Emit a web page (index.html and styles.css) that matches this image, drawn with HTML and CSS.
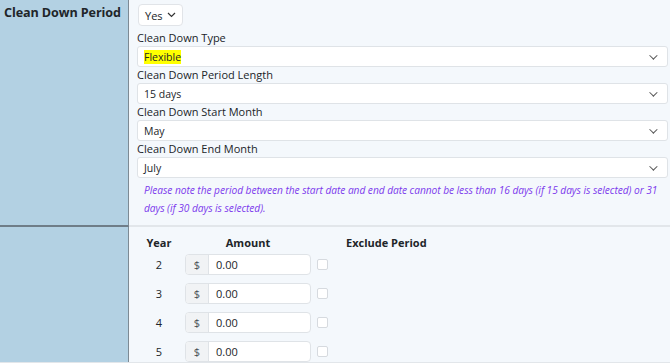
FILE: index.html
```html
<!DOCTYPE html>
<html>
<head>
    <meta charset="utf-8">
    <title>Clean Down Period</title>
    <link rel="stylesheet" href="styles.css">
</head>
<body>
<div class="form-table">
    <div class="row">
        <div class="row-label">Clean Down Period</div>
        <div class="row-body">
            <button type="button" class="yes-btn">Yes
                <svg width="9" height="6" viewBox="0 0 9 6"><path d="M1 1l3.5 3.5L8 1" fill="none" stroke="#333" stroke-width="1.2"/></svg>
            </button>
            <label class="field-label">Clean Down Type</label>
            <div class="select-box"><span class="hl">Flexible</span><span class="caret"></span></div>
            <label class="field-label">Clean Down Period Length</label>
            <div class="select-box"><span>15 days</span><span class="caret"></span></div>
            <label class="field-label">Clean Down Start Month</label>
            <div class="select-box"><span>May</span><span class="caret"></span></div>
            <label class="field-label">Clean Down End Month</label>
            <div class="select-box"><span>July</span><span class="caret"></span></div>
            <p class="note">Please note the period between the start date and end date cannot be less than 16 days (if 15 days is selected) or 31 days (if 30 days is selected).</p>
        </div>
    </div>
    <div class="row">
        <div class="row-label"></div>
        <div class="row-body">
            <div class="amount-head">
                <div class="year">Year</div>
                <div class="amount">Amount</div>
                <div class="exclude">Exclude Period</div>
            </div>
            <div class="amount-row">
                <div class="year">2</div>
                <div class="input-group"><span class="addon">$</span><span class="val">0.00</span></div>
                <span class="box"></span>
            </div>
            <div class="amount-row">
                <div class="year">3</div>
                <div class="input-group"><span class="addon">$</span><span class="val">0.00</span></div>
                <span class="box"></span>
            </div>
            <div class="amount-row">
                <div class="year">4</div>
                <div class="input-group"><span class="addon">$</span><span class="val">0.00</span></div>
                <span class="box"></span>
            </div>
            <div class="amount-row">
                <div class="year">5</div>
                <div class="input-group"><span class="addon">$</span><span class="val">0.00</span></div>
                <span class="box"></span>
            </div>
        </div>
    </div>
</div>
</body>
</html>
```

FILE: styles.css
```css
body {
    margin: 0;
    font-family: "Open Sans", "Noto Sans", sans-serif;
    font-size: 11px;
    color: #212529;
    background: #f4f8fc;
}

.form-table {
    width: 670px;
}

.row {
    display: flex;
    border-bottom: 2px solid #e2e6ea;
}

.row-label {
    width: 124px;
    flex: none;
    background: #b3d1e3;
    border-right: 1px solid #7d8a94;
    padding: 4px 0 0 4px;
    font-weight: bold;
    font-size: 12.6px;
    letter-spacing: -0.1px;
}

.row:first-child .row-label {
    border-bottom: 2px solid #6f7d88;
    margin-bottom: -2px;
}

.row-body {
    flex: 1;
    min-width: 0;
    padding: 4px 2px 0 8px;
}

.yes-btn {
    display: flex;
    align-items: center;
    gap: 4px;
    height: 22px;
    margin: 0 0 4px 1px;
    padding: 0 6px;
    background: #fff;
    border: 1px solid #e1e4e8;
    border-radius: 4px;
    font: inherit;
    color: #212529;
}

.field-label {
    display: block;
    line-height: 16px;
}

.select-box {
    display: flex;
    align-items: center;
    justify-content: space-between;
    height: 19px;
    padding: 0 12px 0 6px;
    background: #fff;
    border: 1px solid #dfe3e7;
    border-radius: 3px;
    font-size: 10.5px;
}

.hl {
    background: #ffff00;
}

.caret {
    width: 5px;
    height: 5px;
    border-right: 1.2px solid #555;
    border-bottom: 1.2px solid #555;
    transform: rotate(45deg) translateY(-2px);
}

.note {
    margin: 3px -2px 0 7px;
    padding-bottom: 8px;
    color: #7c3aed;
    font-style: italic;
    font-size: 10.2px;
    letter-spacing: -0.05px;
    line-height: 18px;
}

.amount-head {
    display: flex;
    padding-top: 4px;
    line-height: 16px;
    font-weight: bold;
}

.year {
    width: 44px;
    margin-right: 4px;
    text-align: center;
}

.amount {
    width: 126px;
    text-align: center;
}

.exclude {
    padding-left: 35px;
}

.amount-row {
    display: flex;
    align-items: center;
    margin-top: 8px;
}

.amount-head + .amount-row {
    margin-top: 3px;
}

.input-group {
    display: flex;
    width: 124px;
    height: 19px;
    border: 1px solid #dfe3e7;
    border-radius: 4px;
    background: #fff;
    overflow: hidden;
}

.addon {
    width: 22px;
    color: #495057;
    background: #f1f3f5;
    border-right: 1px solid #dfe3e7;
    display: flex;
    align-items: center;
    justify-content: center;
}

.val {
    display: flex;
    align-items: center;
    padding-left: 7px;
}

.box {
    display: block;
    width: 9px;
    height: 9px;
    margin-left: 6px;
    border: 1px solid #d6dadf;
    border-radius: 2px;
    background: #fff;
    margin-top: -1px;
}
```
